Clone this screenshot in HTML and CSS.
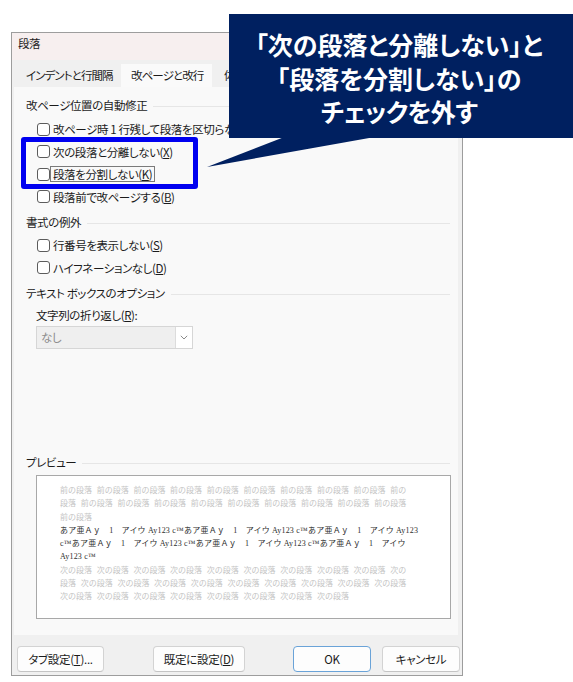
FILE: index.html
```html
<!DOCTYPE html>
<html lang="ja">
<head>
<meta charset="utf-8">
<title>段落</title>
<link rel="stylesheet" href="styles.css">
</head>
<body>
<div class="dialog">
  <div class="titlebar">段落</div>
  <div class="tabs">
    <div class="tab tab-first">インデントと行間隔</div>
    <div class="tab active">改ページと改行</div>
    <div class="tab tab-third">体裁</div>
  </div>
  <div class="panel">
    <div class="heading h1"><span>改ページ位置の自動修正</span></div>
    <div class="checks c1">
      <div class="check"><span class="box"></span><span class="lbl">改ページ時 1 行残して段落を区切らない(<u>W</u>)</span></div>
      <div class="check"><span class="box"></span><span class="lbl">次の段落と分離しない(<u>X</u>)</span></div>
      <div class="check"><span class="box"></span><span class="lbl focus">段落を分割しない(<u>K</u>)</span></div>
      <div class="check"><span class="box"></span><span class="lbl">段落前で改ページする(<u>B</u>)</span></div>
    </div>
    <div class="heading h2"><span>書式の例外</span></div>
    <div class="checks c2">
      <div class="check"><span class="box"></span><span class="lbl">行番号を表示しない(<u>S</u>)</span></div>
      <div class="check"><span class="box"></span><span class="lbl">ハイフネーションなし(<u>D</u>)</span></div>
    </div>
    <div class="heading h3"><span>テキスト ボックスのオプション</span></div>
    <div class="field-label">文字列の折り返し(<u>R</u>):</div>
    <div class="select">
      <span class="select-value">なし</span>
      <span class="select-btn"><svg width="8" height="5" viewBox="0 0 8 5"><path d="M0.8 0.8 L4 4 L7.2 0.8" fill="none" stroke="#8a8a8a" stroke-width="1"/></svg></span>
    </div>
    <div class="heading h4"><span>プレビュー</span></div>
    <div class="preview">
      <div class="pl grey">前の段落 前の段落 前の段落 前の段落 前の段落 前の段落 前の段落 前の段落 前の段落 前の</div>
      <div class="pl grey">段落 前の段落 前の段落 前の段落 前の段落 前の段落 前の段落 前の段落 前の段落 前の段落</div>
      <div class="pl grey">前の段落</div>
      <div class="pl sample">あア亜Ａｙ　1　アイウ Ay123 c™あア亜Ａｙ　1　アイウ Ay123 c™あア亜Ａｙ　1　アイウ Ay123</div>
      <div class="pl sample">c™あア亜Ａｙ　1　アイウ Ay123 c™あア亜Ａｙ　1　アイウ Ay123 c™あア亜Ａｙ　1　アイウ</div>
      <div class="pl sample">Ay123 c™</div>
      <div class="pl grey">次の段落 次の段落 次の段落 次の段落 次の段落 次の段落 次の段落 次の段落 次の段落 次の</div>
      <div class="pl grey">段落 次の段落 次の段落 次の段落 次の段落 次の段落 次の段落 次の段落 次の段落 次の段落</div>
      <div class="pl grey">次の段落 次の段落 次の段落 次の段落 次の段落 次の段落 次の段落 次の段落</div>
    </div>
  </div>
  <div class="footer">
    <button class="btn b-tabs">タブ設定(<u>T</u>)...</button>
    <button class="btn b-default">既定に設定(<u>D</u>)</button>
    <button class="btn b-ok">OK</button>
    <button class="btn b-cancel">キャンセル</button>
  </div>
</div>

<div class="highlight"></div>
<svg class="tail" width="180" height="45" viewBox="200 130 180 45"><polygon points="207,167 283,137.5 372,137.5" fill="#002060"/></svg>
<div class="callout">
  <div>「次の段落と分離しない」と</div>
  <div>「段落を分割しない」の</div>
  <div class="tight">チェックを外す</div>
</div>
</body>
</html>
```

FILE: styles.css
```css
html, body {
  margin: 0;
  padding: 0;
  background: #ffffff;
}
body {
  padding: 32px 0 0 11px;
  font-family: "Noto Sans CJK JP", "Noto Sans", sans-serif;
  font-size: 11.5px;
  letter-spacing: -0.4px;
  color: #1b1b1b;
  font-feature-settings: "palt";
}
u { text-decoration: underline; text-underline-offset: 1px; }

.dialog {
  box-sizing: border-box;
  width: 452px;
  height: 644px;
  border: 1px solid #9d9d9d;
  background: #f0f0f0;
  display: flex;
  flex-direction: column;
}

.titlebar {
  height: 27px;
  background: #f7efef;
  padding: 1px 0 0 6px;
  box-sizing: border-box;
  line-height: 18px;
}

.tabs {
  height: 27px;
  box-sizing: border-box;
  padding-top: 4px;
  display: flex;
  background: #f0f0f0;
}
.tab {
  height: 23px;
  line-height: 23px;
  box-sizing: border-box;
  white-space: nowrap;
  letter-spacing: -0.9px;
}
.tab-first { width: 105px; margin-left: 4px; padding-left: 10px; }
.tab.active { width: 91px; padding-left: 10px; background: #fafafa; }
.tab-third { padding-left: 12px; }

.panel {
  background: #f9f9f9;
  margin: 0 4px 0 2px;
  padding: 0 8px 16px 12px;
  display: flex;
  flex-direction: column;
}

.heading {
  height: 22px;
  line-height: 22px;
  display: flex;
  align-items: center;
  white-space: nowrap;
}
.heading::after {
  content: "";
  flex: 1;
  height: 1px;
  background: #e6e6e6;
  margin-left: 6px;
  margin-top: 2px;
}
.h1 { margin-top: 7px; }
.h2 { margin-top: 3px; }
.h3 { margin-top: 3.25px; }
.h4 { margin-top: 102px; }

.checks { padding-left: 11px; }
.c1 { margin-top: 2px; }
.c2 { margin-top: 0.75px; }
.check {
  height: 22.5px;
  display: flex;
  align-items: center;
  white-space: nowrap;
}
.box {
  box-sizing: border-box;
  width: 13px;
  height: 13px;
  border: 1px solid #5c5c5c;
  border-radius: 3px;
  background: #ffffff;
  flex: none;
}
.lbl {
  border: 1px solid transparent;
  padding: 0 2px;
  line-height: 14px;
}
.lbl.focus { border-color: #7a7a7a; }

.field-label {
  margin-top: 1px;
  height: 20px;
  line-height: 20px;
  padding-left: 10px;
}

.select {
  margin: 1px 0 0 10px;
  width: 157px;
  height: 23px;
  box-sizing: border-box;
  border: 1px solid #d6d6d6;
  background: #efefef;
  display: flex;
}
.select-value {
  flex: 1;
  line-height: 21px;
  padding-left: 4px;
  color: #8c8c8c;
}
.select-btn {
  width: 16px;
  border-left: 1px solid #dcdcdc;
  background: #ffffff;
  display: flex;
  align-items: center;
  justify-content: center;
}

.preview {
  margin: 2px 0 0 10px;
  width: 415px;
  height: 144px;
  box-sizing: border-box;
  border: 1px solid #a8a8a8;
  background: #ffffff;
  padding: 8px 0 0 23px;
  font-family: "Liberation Serif", "Noto Sans CJK JP", serif;
  font-feature-settings: normal;
  letter-spacing: 0;
  font-size: 8px;
}
.pl {
  height: 13.3px;
  line-height: 13.3px;
  white-space: nowrap;
}
.grey { color: #c4c4c4; word-spacing: 2.7px; }
.sample { color: #2e2e2e; letter-spacing: 0.2px; }

.footer {
  flex: 1;
  display: flex;
  align-items: flex-start;
  padding: 11px 0 0 5px;
}
.btn {
  height: 26px;
  box-sizing: border-box;
  border: 1px solid #d3d3d3;
  border-bottom-color: #c4c4c4;
  border-radius: 4px;
  background: #fdfdfd;
  font-family: inherit;
  font-size: 11.5px;
  letter-spacing: -0.3px;
  color: #1b1b1b;
  font-feature-settings: "palt";
  padding: 0;
  line-height: 24px;
}
.b-tabs { width: 87px; }
.b-default { width: 92px; margin-left: 49px; }
.b-ok { width: 78px; margin-left: 48px; border-color: #6aa3d8; }
.b-cancel { width: 78px; margin-left: 11px; }

.highlight {
  position: absolute;
  left: 21px;
  top: 137px;
  width: 177px;
  height: 52px;
  box-sizing: border-box;
  border: 5px solid #0000f0;
  border-radius: 3px;
}

.tail {
  position: absolute;
  left: 200px;
  top: 130px;
}

.callout {
  position: absolute;
  left: 229px;
  top: 14px;
  width: 344px;
  height: 124px;
  box-sizing: border-box;
  padding: 14px 4px 0 0;
  background: #002060;
  color: #ffffff;
  font-weight: 700;
  font-size: 25px;
  letter-spacing: 0;
  line-height: 33.5px;
  text-align: center;
  font-feature-settings: "palt";
  white-space: nowrap;
}
.callout .tight { letter-spacing: -0.6px; }
```
